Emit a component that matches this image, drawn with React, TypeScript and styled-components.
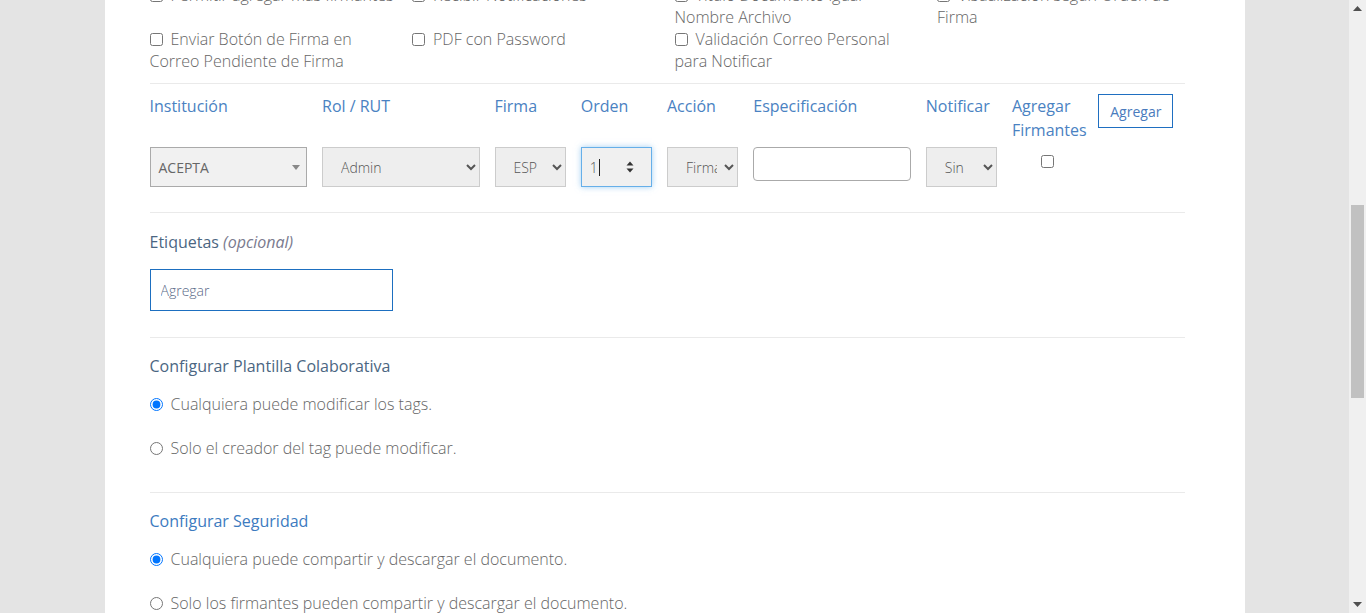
import React, { useLayoutEffect, useRef } from 'react';
import styled, { createGlobalStyle } from 'styled-components';

// content of the form that sits above the visible part of the page
const PRIOR_CONTENT = 584;
const SCROLL_TOP = 600;

const GlobalStyle = createGlobalStyle`
  html, body {
    margin: 0;
    padding: 0;
    height: 100%;
    overflow: hidden;
  }
  body {
    background: #e4e4e4;
    font-family: "Open Sans", "Liberation Sans", sans-serif;
    font-weight: 300;
  }
  #root {
    height: 100%;
  }
`;

const Page = styled.div`
  display: flex;
  height: 100vh;
`;

const Viewport = styled.div`
  flex: 1;
  overflow: hidden;
  background: #e4e4e4;
`;

const ScrollRail = styled.div`
  width: 17px;
  flex-shrink: 0;
  display: flex;
  flex-direction: column;
  align-items: center;
  background: #f0f0f0;
`;

const RailButton = styled.div`
  height: 17px;
  display: flex;
  align-items: center;
  justify-content: center;
`;

const RailTrack = styled.div`
  flex: 1;
  width: 100%;
  display: flex;
  justify-content: center;
`;

const RailThumb = styled.div<{ $offset: number; $size: number }>`
  width: 13px;
  height: ${(p) => p.$size}px;
  margin-top: ${(p) => p.$offset}px;
  background: #c1c1c1;
`;

const Panel = styled.main`
  width: 1140px;
  min-height: 1845px;
  margin: 0 auto;
  box-sizing: border-box;
  padding: ${PRIOR_CONTENT}px 60px 0 45px;
  background: #fff;
`;

const CheckGrid = styled.div`
  display: grid;
  grid-template-columns: repeat(4, 262.5px);
  font-size: 16px;
  line-height: 22px;
  color: #666;
`;

const CheckLabel = styled.label`
  padding-right: 15px;
`;

const CheckBox = styled.input.attrs({ type: 'checkbox' })`
  width: 13px;
  height: 13px;
  margin: 0 8px 0 0;
  vertical-align: -1px;
`;

const Divider = styled.hr<{ $top: number; $bottom: number }>`
  border: 0;
  border-top: 1px solid #eaeaea;
  margin: ${(p) => p.$top}px 0 ${(p) => p.$bottom}px;
`;

const SignerGrid = styled.div`
  display: grid;
  grid-template-columns: repeat(12, 86.25px);
  row-gap: 5px;
  align-items: start;
`;

const Cell = styled.div<{ $span: number; $center?: boolean }>`
  grid-column: span ${(p) => p.$span};
  padding-right: 15px;
  box-sizing: border-box;
  text-align: ${(p) => (p.$center ? 'center' : 'left')};
`;

const FieldLabel = styled.div`
  font-size: 16px;
  font-weight: 400;
  line-height: 24px;
  color: #4a82c2;
`;

const OutlineButton = styled.button`
  height: 34px;
  padding: 0 11px;
  border: 1px solid #1f6fc1;
  background: #fff;
  color: #4a7bbd;
  font-family: inherit;
  font-weight: 400;
  font-size: 14px;
  white-space: nowrap;
  cursor: pointer;
`;

const ComboBox = styled.div`
  height: 40px;
  box-sizing: border-box;
  display: flex;
  align-items: center;
  justify-content: space-between;
  padding: 0 6px 0 8px;
  border: 1px solid #aaa;
  background: #f1f1f1;
  font-size: 14px;
  font-weight: 400;
  color: #666;
`;

const ComboArrow = styled.span`
  width: 0;
  height: 0;
  border-left: 4px solid transparent;
  border-right: 4px solid transparent;
  border-top: 5px solid #888;
`;

const Select = styled.select`
  width: 100%;
  height: 40px;
  box-sizing: border-box;
  padding: 0 4px 0 14px;
  border: 1px solid #ccc;
  border-radius: 0;
  background: #eee;
  font-family: inherit;
  font-weight: 300;
  font-size: 14px;
  color: #555;
`;

const NumberBox = styled.div`
  height: 40px;
  box-sizing: border-box;
  display: flex;
  align-items: center;
  padding: 0 17px 0 8px;
  border: 1px solid #66afe9;
  box-shadow: 0 0 6px rgba(102, 175, 233, 0.6);
  background: #f0f0f0;
  font-size: 14px;
  color: #555;
`;

const Caret = styled.span`
  width: 1px;
  height: 17px;
  margin-left: 1px;
  background: #222;
`;

const Spinner = styled.svg`
  margin-left: auto;
`;

const TextInput = styled.input`
  width: 100%;
  height: 34px;
  box-sizing: border-box;
  padding: 0 10px;
  border: 1px solid #aaa;
  border-radius: 4px;
  background: #fff;
  font-family: inherit;
  font-size: 14px;
`;

const SectionTitle = styled.div<{ $tone: 'slate' | 'blue' }>`
  font-size: 16px;
  font-weight: 400;
  line-height: 22px;
  color: ${(p) => (p.$tone === 'blue' ? '#3d7bbf' : '#4b6682')};

  em {
    color: #7a7a8e;
  }
`;

const TagInput = styled.input`
  display: block;
  width: 243px;
  height: 42px;
  box-sizing: border-box;
  margin-top: 16px;
  padding: 0 10px;
  border: 1px solid #1d6fc0;
  background: #fff;
  font-family: inherit;
  font-weight: 300;
  font-size: 14px;

  &::placeholder {
    color: #5a6a88;
  }
`;

const RadioList = styled.div`
  display: flex;
  flex-direction: column;
  gap: 22px;
  margin-top: 16px;
  font-size: 16px;
  line-height: 22px;
  color: #666;
`;

const Radio = styled.input.attrs({ type: 'radio' })`
  width: 13px;
  height: 13px;
  margin: 0 8px 0 0;
  vertical-align: -1px;
`;

const optionChecks = [
  'Permitir agregar más firmantes',
  'Recibir Notificaciones',
  'Título Documento igual Nombre Archivo',
  'Visualización según Orden de Firma',
  'Enviar Botón de Firma en Correo Pendiente de Firma',
  'PDF con Password',
  'Validación Correo Personal para Notificar',
];

const headers: { label: string; span: number }[] = [
  { label: 'Institución', span: 2 },
  { label: 'Rol / RUT', span: 2 },
  { label: 'Firma', span: 1 },
  { label: 'Orden', span: 1 },
  { label: 'Acción', span: 1 },
  { label: 'Especificación', span: 2 },
  { label: 'Notificar', span: 1 },
  { label: 'Agregar Firmantes', span: 1 },
];

const App: React.FC = () => {
  const viewportRef = useRef<HTMLDivElement>(null);

  useLayoutEffect(() => {
    if (viewportRef.current) viewportRef.current.scrollTop = SCROLL_TOP;
  }, []);

  return (
    <>
      <GlobalStyle />
      <Page>
        <Viewport ref={viewportRef}>
          <Panel>
            <CheckGrid>
              {optionChecks.map((text) => (
                <CheckLabel key={text}>
                  <CheckBox />
                  {text}
                </CheckLabel>
              ))}
            </CheckGrid>

            <Divider $top={11} $bottom={10} />

            <SignerGrid>
              {headers.map((h) => (
                <Cell key={h.label} $span={h.span}>
                  <FieldLabel>{h.label}</FieldLabel>
                </Cell>
              ))}
              <Cell $span={1}>
                <OutlineButton type="button">Agregar</OutlineButton>
              </Cell>

              <Cell $span={2}>
                <ComboBox>
                  ACEPTA
                  <ComboArrow />
                </ComboBox>
              </Cell>
              <Cell $span={2}>
                <Select defaultValue="Admin">
                  <option>Admin</option>
                  <option>Firmante</option>
                </Select>
              </Cell>
              <Cell $span={1}>
                <Select defaultValue="ESP">
                  <option>ESP</option>
                  <option>FEA</option>
                </Select>
              </Cell>
              <Cell $span={1}>
                <NumberBox>
                  1
                  <Caret />
                  <Spinner width="8" height="12" viewBox="0 0 8 12">
                    <path d="M0.5 4.5 L4 0.5 L7.5 4.5Z" fill="#333" />
                    <path d="M0.5 7.5 L4 11.5 L7.5 7.5Z" fill="#333" />
                  </Spinner>
                </NumberBox>
              </Cell>
              <Cell $span={1}>
                <Select defaultValue="Firma">
                  <option>Firma</option>
                  <option>Visación</option>
                </Select>
              </Cell>
              <Cell $span={2}>
                <TextInput type="text" />
              </Cell>
              <Cell $span={1}>
                <Select defaultValue="Sin">
                  <option>Sin</option>
                  <option>Con</option>
                </Select>
              </Cell>
              <Cell $span={1} $center>
                <CheckBox style={{ margin: '8px 0 0' }} />
              </Cell>
              <Cell $span={1} />
            </SignerGrid>

            <Divider $top={25} $bottom={18} />

            <SectionTitle $tone="slate">
              Etiquetas <em>(opcional)</em>
            </SectionTitle>
            <TagInput type="text" placeholder="Agregar" />

            <Divider $top={26} $bottom={17} />

            <SectionTitle $tone="slate">Configurar Plantilla Colaborativa</SectionTitle>
            <RadioList>
              <label>
                <Radio name="plantilla" defaultChecked />
                Cualquiera puede modificar los tags.
              </label>
              <label>
                <Radio name="plantilla" />
                Solo el creador del tag puede modificar.
              </label>
            </RadioList>

            <Divider $top={33} $bottom={17} />

            <SectionTitle $tone="blue">Configurar Seguridad</SectionTitle>
            <RadioList>
              <label>
                <Radio name="seguridad" defaultChecked />
                Cualquiera puede compartir y descargar el documento.
              </label>
              <label>
                <Radio name="seguridad" />
                Solo los firmantes pueden compartir y descargar el documento.
              </label>
            </RadioList>
          </Panel>
        </Viewport>
        <ScrollRail>
          <RailButton>
            <svg width="9" height="5" viewBox="0 0 9 5">
              <path d="M0 5 L4.5 0 L9 5Z" fill="#505050" />
            </svg>
          </RailButton>
          <RailTrack>
            <RailThumb $offset={188} $size={193} />
          </RailTrack>
          <RailButton>
            <svg width="9" height="5" viewBox="0 0 9 5">
              <path d="M0 0 L4.5 5 L9 0Z" fill="#505050" />
            </svg>
          </RailButton>
        </ScrollRail>
      </Page>
    </>
  );
};

export default App;
